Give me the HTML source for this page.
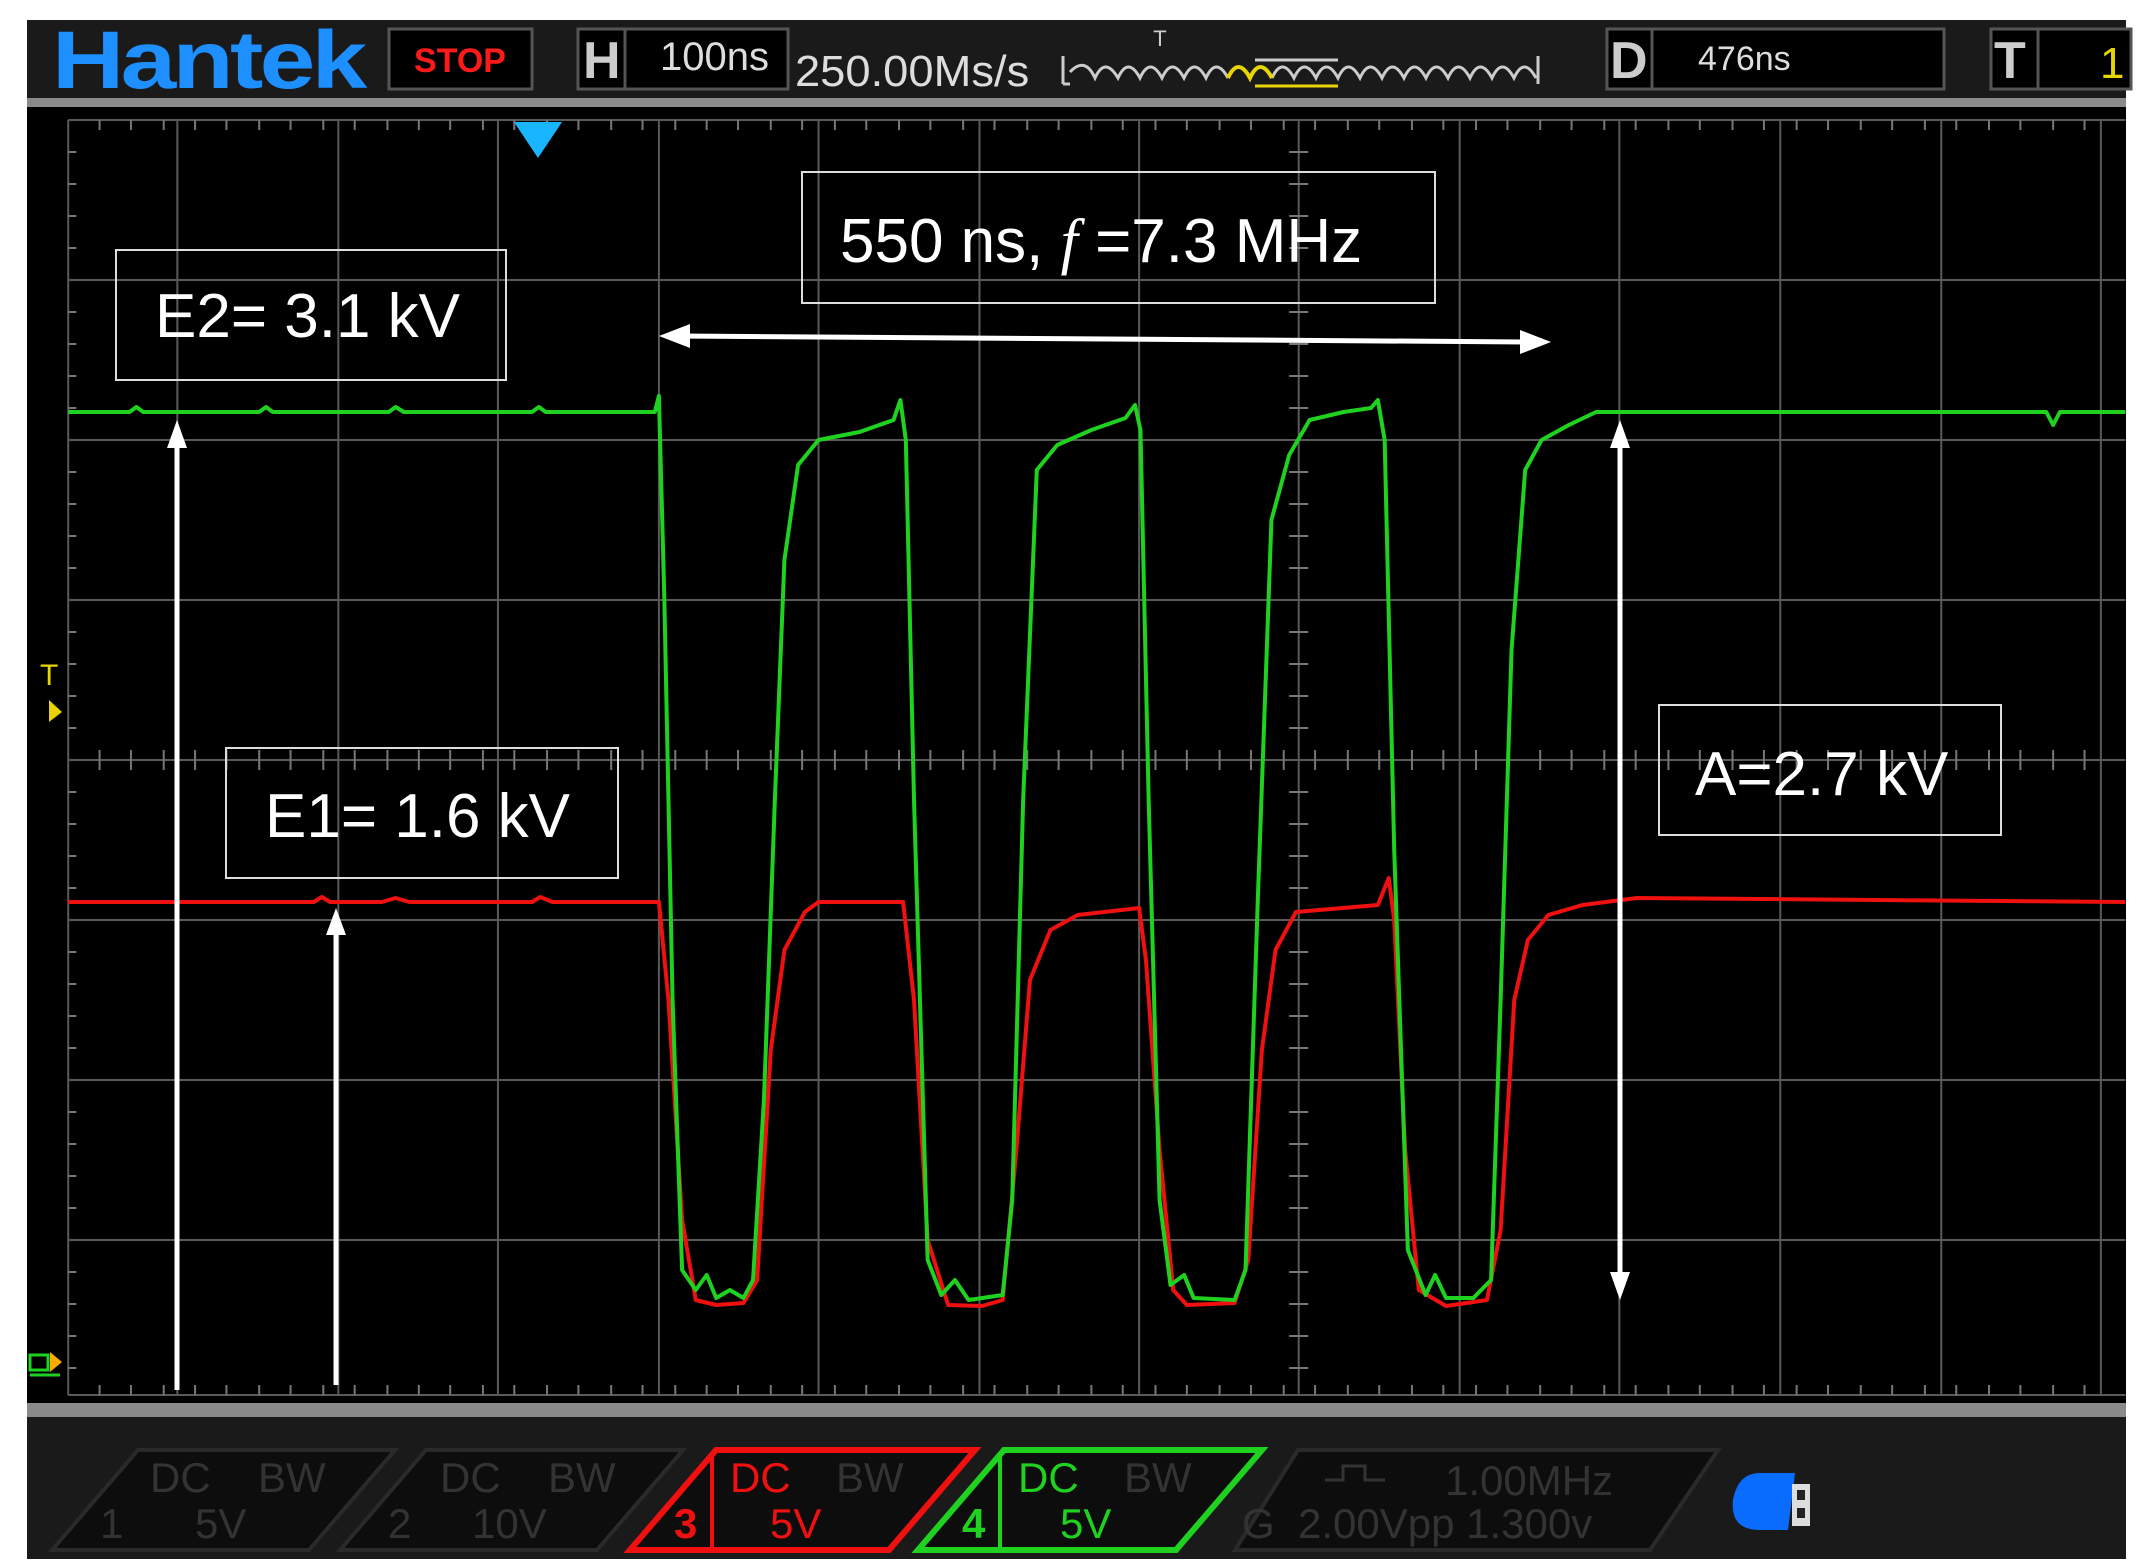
<!DOCTYPE html>
<html><head><meta charset="utf-8"><style>
html,body{margin:0;padding:0;background:#fff;width:2139px;height:1568px;overflow:hidden}
svg{display:block}
text{font-family:"Liberation Sans",sans-serif}
</style></head><body>
<svg width="2139" height="1568" viewBox="0 0 2139 1568" xmlns="http://www.w3.org/2000/svg">
<rect x="0" y="0" width="2139" height="1568" fill="#fff"/>
<!-- screen -->
<rect x="27" y="20" width="2099" height="1539" fill="#1b1a1b"/>
<rect x="27" y="98" width="2099" height="9" fill="#8a8a8a"/>
<rect x="27" y="107" width="2099" height="1300" fill="#000"/>
<rect x="27" y="1403" width="2099" height="14" fill="#8a8a8a"/>
<rect x="27" y="1417" width="2099" height="142" fill="#1b1a1b"/>

<!-- header -->
<text x="52" y="88" font-size="82" font-weight="bold" fill="#1e8fff" transform="translate(52 0) scale(1.22 1) translate(-52 0)" letter-spacing="-3">Hantek</text>
<rect x="389" y="29" width="143" height="60" fill="#000" stroke="#555" stroke-width="3"/>
<text x="460" y="72" font-size="34" font-weight="bold" fill="#ff1a1a" text-anchor="middle">STOP</text>
<rect x="578" y="29" width="210" height="60" fill="#000" stroke="#555" stroke-width="3"/>
<line x1="625" y1="29" x2="625" y2="89" stroke="#555" stroke-width="3"/>
<text x="583" y="78" font-size="52" font-weight="bold" fill="#ccc">H</text>
<text x="660" y="70" font-size="40" fill="#ddd">100ns</text>
<text x="795" y="86" font-size="44" fill="#ddd" transform="translate(795 0) scale(1.03 1) translate(-795 0)">250.00Ms/s</text>
<path d="M1063,56 L1063,84 M1063,84 L1070,84 M1070,72 Q1085,56 1095,78 Q1105,56 1118,78 Q1128,56 1140,78 Q1150,56 1162,78 Q1172,56 1184,78 Q1194,56 1206,78 Q1216,56 1228,78 M1272,78 Q1282,56 1294,78 Q1304,56 1316,78 Q1326,56 1338,78 Q1348,56 1360,78 Q1370,56 1382,78 Q1392,56 1404,78 Q1414,56 1426,78 Q1436,56 1448,78 Q1458,56 1470,78 Q1480,56 1492,78 Q1502,56 1514,78 Q1524,56 1536,78 M1538,56 L1538,84" fill="none" stroke="#ccc" stroke-width="3"/>
<path d="M1228,78 Q1238,56 1250,78 Q1260,56 1272,78" fill="none" stroke="#e8d400" stroke-width="4"/>
<line x1="1255" y1="60" x2="1338" y2="60" stroke="#ccc" stroke-width="3"/>
<line x1="1255" y1="86" x2="1338" y2="86" stroke="#e8d400" stroke-width="3"/>
<text x="1160" y="46" font-size="22" fill="#ccc" text-anchor="middle">T</text>
<rect x="1607" y="29" width="337" height="60" fill="#000" stroke="#555" stroke-width="3"/>
<line x1="1652" y1="29" x2="1652" y2="89" stroke="#555" stroke-width="3"/>
<text x="1610" y="78" font-size="52" font-weight="bold" fill="#ccc">D</text>
<text x="1698" y="70" font-size="34" fill="#ddd">476ns</text>
<rect x="1991" y="29" width="140" height="60" fill="#000" stroke="#555" stroke-width="3"/>
<line x1="2038" y1="29" x2="2038" y2="89" stroke="#555" stroke-width="3"/>
<text x="1994" y="78" font-size="52" font-weight="bold" fill="#ccc">T</text>
<text x="2100" y="78" font-size="44" fill="#e8d400">1</text>

<!-- grid -->
<g transform="scale(1.3642 1)" stroke="#5a5a5a" stroke-width="2" fill="none">
<path vector-effect="non-scaling-stroke" d="M50,120 V1395 M130,120 V1395 M248,120 V1395 M365,120 V1395 M483,120 V1395 M600,120 V1395 M718,120 V1395 M835,120 V1395 M952,120 V1395 M1070,120 V1395 M1187,120 V1395 M1305,120 V1395 M1423,120 V1395 M1540,120 V1395"/>
<path vector-effect="non-scaling-stroke" d="M50,120 H1558 M50,280 H1558 M50,440 H1558 M50,600 H1558 M50,760 H1558 M50,920 H1558 M50,1080 H1558 M50,1240 H1558 M50,1395 H1558"/>
<path vector-effect="non-scaling-stroke" stroke="#777" d="M73,120v10M96,120v10M120,120v10M143,120v10M166,120v10M190,120v10M213,120v10M237,120v10M260,120v10M284,120v10M307,120v10M330,120v10M354,120v10M377,120v10M401,120v10M424,120v10M448,120v10M471,120v10M495,120v10M518,120v10M541,120v10M565,120v10M588,120v10M612,120v10M635,120v10M659,120v10M682,120v10M706,120v10M729,120v10M753,120v10M776,120v10M800,120v10M823,120v10M847,120v10M870,120v10M894,120v10M917,120v10M941,120v10M964,120v10M988,120v10M1011,120v10M1035,120v10M1058,120v10M1082,120v10M1105,120v10M1129,120v10M1152,120v10M1176,120v10M1199,120v10M1223,120v10M1246,120v10M1270,120v10M1293,120v10M1317,120v10M1340,120v10M1364,120v10M1387,120v10M1411,120v10M1434,120v10M1458,120v10M1481,120v10M1505,120v10M1528,120v10
M73,750v20M96,750v20M120,750v20M143,750v20M166,750v20M190,750v20M213,750v20M237,750v20M260,750v20M284,750v20M307,750v20M330,750v20M354,750v20M377,750v20M401,750v20M424,750v20M448,750v20M471,750v20M495,750v20M518,750v20M541,750v20M565,750v20M588,750v20M612,750v20M635,750v20M659,750v20M682,750v20M706,750v20M729,750v20M753,750v20M776,750v20M800,750v20M823,750v20M847,750v20M870,750v20M894,750v20M917,750v20M941,750v20M964,750v20M988,750v20M1011,750v20M1035,750v20M1058,750v20M1082,750v20M1105,750v20M1129,750v20M1152,750v20M1176,750v20M1199,750v20M1223,750v20M1246,750v20M1270,750v20M1293,750v20M1317,750v20M1340,750v20M1364,750v20M1387,750v20M1411,750v20M1434,750v20M1458,750v20M1481,750v20M1505,750v20M1528,750v20
M73,1385v10M96,1385v10M120,1385v10M143,1385v10M166,1385v10M190,1385v10M213,1385v10M237,1385v10M260,1385v10M284,1385v10M307,1385v10M330,1385v10M354,1385v10M377,1385v10M401,1385v10M424,1385v10M448,1385v10M471,1385v10M495,1385v10M518,1385v10M541,1385v10M565,1385v10M588,1385v10M612,1385v10M635,1385v10M659,1385v10M682,1385v10M706,1385v10M729,1385v10M753,1385v10M776,1385v10M800,1385v10M823,1385v10M847,1385v10M870,1385v10M894,1385v10M917,1385v10M941,1385v10M964,1385v10M988,1385v10M1011,1385v10M1035,1385v10M1058,1385v10M1082,1385v10M1105,1385v10M1129,1385v10M1152,1385v10M1176,1385v10M1199,1385v10M1223,1385v10M1246,1385v10M1270,1385v10M1293,1385v10M1317,1385v10M1340,1385v10M1364,1385v10M1387,1385v10M1411,1385v10M1434,1385v10M1458,1385v10M1481,1385v10M1505,1385v10M1528,1385v10
M945,152h14M945,184h14M945,216h14M945,248h14M945,312h14M945,344h14M945,376h14M945,408h14M945,472h14M945,504h14M945,536h14M945,568h14M945,632h14M945,664h14M945,696h14M945,728h14M945,792h14M945,824h14M945,856h14M945,888h14M945,952h14M945,984h14M945,1016h14M945,1048h14M945,1112h14M945,1144h14M945,1176h14M945,1208h14M945,1272h14M945,1304h14M945,1336h14M945,1368h14
M50,152h6M50,184h6M50,216h6M50,248h6M50,312h6M50,344h6M50,376h6M50,408h6M50,472h6M50,504h6M50,536h6M50,568h6M50,632h6M50,664h6M50,696h6M50,728h6M50,792h6M50,824h6M50,856h6M50,888h6M50,952h6M50,984h6M50,1016h6M50,1048h6M50,1112h6M50,1144h6M50,1176h6M50,1208h6M50,1272h6M50,1304h6M50,1336h6M50,1368h6"/>
</g>

<!-- traces -->
<g transform="scale(1.3642 1)" fill="none" stroke-width="4" stroke-linejoin="round">
<path vector-effect="non-scaling-stroke" stroke="#f01010" d="M50,902 L230,902 L236,897 L242,902 L280,902 L290,898 L300,902 L390,902 L396,897 L405,902 L483,902 L490,1000 L500,1220 L510,1300 L525,1305 L545,1303 L555,1280 L565,1050 L575,950 L590,912 L600,902 L662,902 L670,1000 L680,1240 L695,1305 L720,1306 L735,1300 L745,1150 L755,980 L770,930 L790,915 L835,908 L840,960 L850,1150 L860,1290 L870,1305 L905,1303 L915,1260 L925,1050 L935,950 L950,912 L1010,905 L1018,878 L1022,920 L1030,1150 L1040,1290 L1060,1306 L1090,1300 L1100,1230 L1110,1000 L1120,940 L1135,915 L1160,905 L1200,898 L1558,902"/>
<path vector-effect="non-scaling-stroke" stroke="#1fd21f" d="M50,412 L95,412 L100,407 L105,412 L190,412 L195,407 L200,412 L285,412 L290,407 L296,412 L390,412 L395,407 L400,412 L480,412 L483,396 L487,600 L493,1000 L500,1270 L510,1290 L518,1275 L525,1298 L535,1290 L545,1298 L552,1280 L560,1100 L568,800 L575,560 L585,465 L600,440 L630,432 L655,420 L660,400 L664,440 L670,800 L680,1260 L690,1295 L700,1280 L710,1300 L735,1295 L742,1200 L750,800 L760,470 L775,445 L800,430 L825,418 L832,405 L836,430 L842,800 L850,1200 L858,1285 L868,1275 L875,1298 L905,1300 L913,1270 L922,900 L932,520 L945,455 L960,420 L985,412 L1005,408 L1010,400 L1015,440 L1022,850 L1032,1250 L1045,1295 L1052,1275 L1060,1298 L1080,1298 L1093,1280 L1100,1000 L1108,650 L1118,470 L1130,440 L1150,425 L1170,412 L1500,412 L1505,425 L1510,412 L1558,412"/>
</g>

<!-- markers -->
<path d="M514,122 L562,122 L538,158 Z" fill="#19b6ff"/>
<text x="40" y="685" font-size="30" fill="#e8d400">T</text>
<path d="M49,700 L62,712 L49,722 Z" fill="#e8d400"/>
<path d="M30,1355 h18 v15 h-18z M30,1375 h30" fill="none" stroke="#1fd21f" stroke-width="3"/>
<path d="M50,1352 L62,1362 L50,1372 Z" fill="#ffaa00"/>

<!-- arrows -->
<g stroke="#fff" stroke-width="5" fill="#fff">
<line x1="177" y1="440" x2="177" y2="1390"/>
<path d="M177,420 L167,448 L187,448 Z" stroke="none"/>
<line x1="336" y1="930" x2="336" y2="1385"/>
<path d="M336,908 L326,935 L346,935 Z" stroke="none"/>
<line x1="1620" y1="440" x2="1620" y2="1280"/>
<path d="M1620,420 L1610,448 L1630,448 Z M1620,1300 L1610,1272 L1630,1272 Z" stroke="none"/>
<line x1="680" y1="336" x2="1530" y2="342"/>
<path d="M659,336 L690,324 L690,348 Z M1551,342 L1520,330 L1520,354 Z" stroke="none"/>
</g>

<!-- annotation boxes -->
<g fill="none" stroke="#ddd" stroke-width="2">
<rect x="802" y="172" width="633" height="131"/>
<rect x="116" y="250" width="390" height="130"/>
<rect x="226" y="748" width="392" height="130"/>
<rect x="1659" y="705" width="342" height="130"/>
</g>
<g fill="#fff" font-size="62">
<text x="840" y="262">550 ns, <tspan font-style="italic" font-family="Liberation Serif">f</tspan> =7.3 MHz</text>
<text x="155" y="337">E2= 3.1 kV</text>
<text x="265" y="837">E1= 1.6 kV</text>
<text x="1695" y="795">A=2.7 kV</text>
</g>

<!-- bottom channel tabs -->
<g font-size="42">
<path d="M52,1550 L138,1450 L395,1450 L309,1550 Z" fill="#0d0d0d" stroke="#2a2a2a" stroke-width="4"/>
<text x="100" y="1538" fill="#333">1</text>
<text x="150" y="1492" fill="#333">DC</text><text x="258" y="1492" fill="#333">BW</text>
<text x="195" y="1538" fill="#333">5V</text>
<path d="M340,1550 L426,1450 L683,1450 L597,1550 Z" fill="#0d0d0d" stroke="#2a2a2a" stroke-width="4"/>
<text x="388" y="1538" fill="#333">2</text>
<text x="440" y="1492" fill="#333">DC</text><text x="548" y="1492" fill="#333">BW</text>
<text x="472" y="1538" fill="#333">10V</text>
<path d="M630,1550 L716,1450 L975,1450 L889,1550 Z" fill="#0d0d0d" stroke="#f01010" stroke-width="6"/>
<line x1="712" y1="1455" x2="712" y2="1548" stroke="#f01010" stroke-width="4"/>
<text x="674" y="1538" fill="#f01010" font-weight="bold">3</text>
<text x="730" y="1492" fill="#f01010">DC</text><text x="836" y="1492" fill="#333">BW</text>
<text x="770" y="1538" fill="#f01010">5V</text>
<path d="M918,1550 L1004,1450 L1262,1450 L1176,1550 Z" fill="#0d0d0d" stroke="#1fd21f" stroke-width="6"/>
<line x1="1000" y1="1455" x2="1000" y2="1548" stroke="#1fd21f" stroke-width="4"/>
<text x="962" y="1538" fill="#1fd21f" font-weight="bold">4</text>
<text x="1018" y="1492" fill="#1fd21f">DC</text><text x="1124" y="1492" fill="#333">BW</text>
<text x="1060" y="1538" fill="#1fd21f">5V</text>
<path d="M1235,1550 L1298,1450 L1718,1450 L1650,1550 Z" fill="#0d0d0d" stroke="#2a2a2a" stroke-width="4"/>
<text x="1242" y="1538" fill="#333">G</text>
<path d="M1325,1480 h18 v-14 h22 v14 h20" fill="none" stroke="#333" stroke-width="3"/>
<text x="1445" y="1495" fill="#333">1.00MHz</text>
<text x="1298" y="1538" fill="#333">2.00Vpp 1.300v</text>
</g>
<path d="M1760,1473 L1795,1473 L1788,1530 L1760,1530 Q1730,1530 1733,1500 Q1738,1473 1760,1473 Z" fill="#0a6cff"/>
<rect x="1792" y="1484" width="18" height="42" fill="#ddd"/>
<rect x="1797" y="1490" width="8" height="10" fill="#222"/><rect x="1797" y="1508" width="8" height="10" fill="#222"/>
</svg>
</body></html>
